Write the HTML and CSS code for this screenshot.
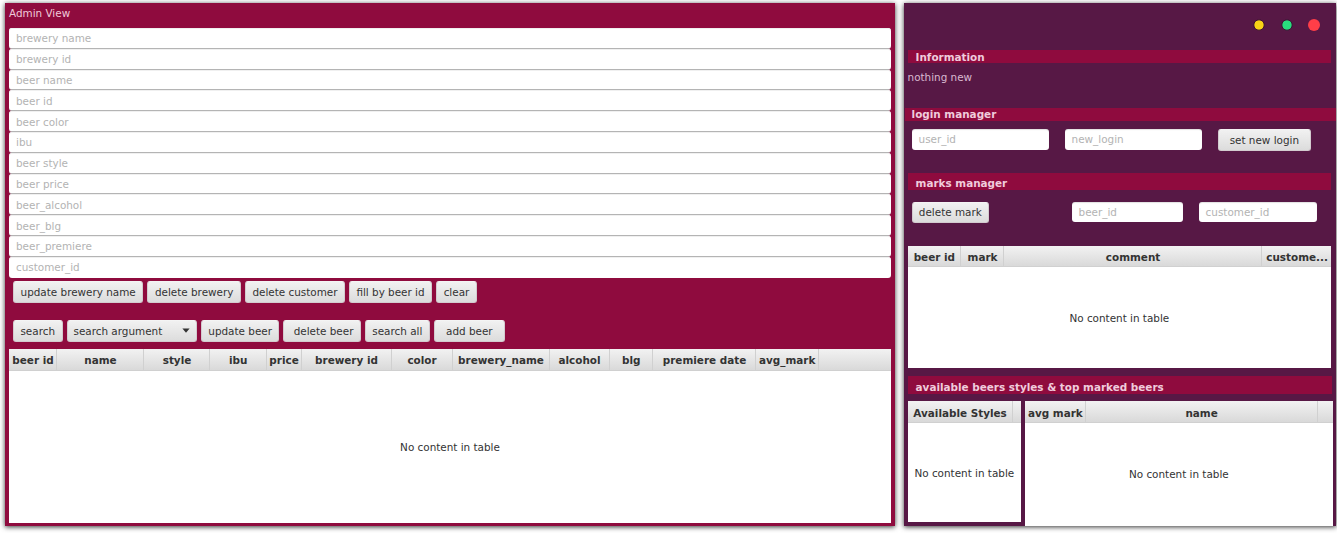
FILE: index.html
```
<!DOCTYPE html>
<html lang="en">
<head>
<meta charset="utf-8">
<title>Admin View</title>
<link rel="stylesheet" href="styles.css">
</head>
<body>
<main class="desktop">
  <section class="window admin">
    <h1 class="title">Admin View</h1>
    <div class="form">
      <div class="field">brewery name</div>
      <div class="field">brewery id</div>
      <div class="field">beer name</div>
      <div class="field">beer id</div>
      <div class="field">beer color</div>
      <div class="field">ibu</div>
      <div class="field">beer style</div>
      <div class="field">beer price</div>
      <div class="field">beer_alcohol</div>
      <div class="field">beer_blg</div>
      <div class="field">beer_premiere</div>
      <div class="field">customer_id</div>
    </div>
    <div class="toolbar toolbar-top">
      <button class="btn w-update-brewery">update brewery name</button>
      <button class="btn w-delete-brewery">delete brewery</button>
      <button class="btn w-delete-customer">delete customer</button>
      <button class="btn w-fill">fill by beer id</button>
      <button class="btn w-clear">clear</button>
    </div>
    <div class="toolbar">
      <button class="btn w-search">search</button>
      <button class="btn combo">search argument<svg class="arrow" viewBox="0 0 8 5"><path d="M0.4 0.4h7.2L4 4.7z"/></svg></button>
      <button class="btn w-update-beer">update beer</button>
      <button class="btn w-delete-beer">delete beer</button>
      <button class="btn w-search-all">search all</button>
      <button class="btn w-add">add beer</button>
    </div>
    <div class="table beers">
      <div class="head">
        <span>beer id</span><span>name</span><span>style</span><span>ibu</span><span>price</span><span>brewery id</span><span>color</span><span>brewery_name</span><span>alcohol</span><span>blg</span><span>premiere date</span><span>avg_mark</span><span></span>
      </div>
      <div class="empty">No content in table</div>
    </div>
  </section>

  <section class="window manager">
    <div class="controls">
      <svg class="dot" viewBox="0 0 14 14"><circle cx="7" cy="7" r="5.2" fill="#f9d216" stroke="#3b1033" stroke-width="1"/></svg>
      <svg class="dot" viewBox="0 0 14 14"><circle cx="7" cy="7" r="5.2" fill="#29dd7d" stroke="#3b1033" stroke-width="1"/></svg>
      <svg class="dot" viewBox="0 0 14 14"><circle cx="7" cy="7" r="6" fill="#ff3e48"/></svg>
    </div>
    <h2 class="bar bar-info">Information</h2>
    <p class="message">nothing new</p>
    <h2 class="bar bar-login">login manager</h2>
    <div class="row login-row">
      <div class="field">user_id</div>
      <div class="field">new_login</div>
      <button class="btn">set new login</button>
    </div>
    <h2 class="bar bar-marks">marks manager</h2>
    <div class="row marks-row">
      <button class="btn">delete mark</button>
      <div class="field beer-field">beer_id</div>
      <div class="field customer-field">customer_id</div>
    </div>
    <div class="table marks">
      <div class="head"><span>beer id</span><span>mark</span><span>comment</span><span>custome...</span></div>
      <div class="empty">No content in table</div>
    </div>
    <h2 class="bar bar-styles">available beers styles &amp; top marked beers</h2>
    <div class="bottom">
      <div class="table styles">
        <div class="head"><span>Available Styles</span><span></span></div>
        <div class="empty">No content in table</div>
      </div>
      <div class="table top">
        <div class="head"><span>avg mark</span><span>name</span><span></span></div>
        <div class="empty">No content in table</div>
      </div>
    </div>
  </section>
</main>
</body>
</html>
```
FILE: styles.css
```
* { box-sizing: border-box; }
body {
  margin: 0;
  background: #fff;
  font: 10.42px/14px "DejaVu Sans", sans-serif;
  color: #333;
  overflow: hidden;
}
h1, h2, p { margin: 0; font-size: inherit; }
.desktop {
  display: flex;
  gap: 8.2px;
  width: 1337px;
  height: 533px;
  padding: 3px 0 0 5px;
}
.window {
  height: 522.5px;
  display: flex;
  flex-direction: column;
  flex: none;
  box-shadow: 0 1px 5px rgba(0, 0, 0, .8);
}
.admin { width: 890.4px; padding: 0 4.4px 3px 4px; background: #8f0b3e; }
.manager { width: 432px; padding: 0 4px; background: #571845; }
.title { height: 25px; padding-top: 3px; font-weight: normal; color: #efc9d9; }
.form { display: grid; grid-template-rows: repeat(12, 20.8px); }
.field {
  display: flex;
  align-items: center;
  padding: 0 7px;
  background: #fff;
  border-radius: 3px;
  box-shadow: inset 0 1px 1px rgba(0, 0, 0, .12);
  color: #b3b3b3;
}
.form .field { padding-top: 1px; border-bottom: 1px solid #b4b4b4; box-shadow: inset 0 1px 0 #f0f0f0; }
.form .field:last-child { border-bottom: 0; padding-top: 0; }
.btn {
  height: 21.5px;
  padding: 0;
  border: 1px solid #d3cbcf;
  border-top-color: #f4f4f4;
  border-radius: 3px;
  background: linear-gradient(#f1f1f1, #dcdcdc);
  font: inherit;
  color: #333;
  white-space: nowrap;
}
.toolbar { display: flex; gap: 4px; padding: 0 4px; margin-bottom: 7.5px; }
.toolbar-top { margin: 3.6px 0 17.4px; }
.w-update-brewery { width: 130.3px; }
.w-delete-brewery { width: 93.7px; }
.w-delete-customer { width: 100px; }
.w-fill { width: 83px; }
.w-clear { width: 41px; }
.w-search { width: 49.5px; }
.combo { width: 130.5px; display: flex; align-items: center; justify-content: space-between; padding: 0 6px; }
.arrow { width: 8px; height: 5px; fill: #333; }
.w-update-beer { width: 78.3px; }
.w-delete-beer { width: 77.5px; padding-left: 3px; }
.w-search-all { width: 65px; }
.w-add { width: 71px; }
.table { display: flex; flex-direction: column; background: #fff; }
.head {
  display: grid;
  height: 21.5px;
  flex: none;
  background: linear-gradient(#f2f2f2, #d9d9d9);
  border-bottom: 1px solid #d0d0d0;
  font-weight: bold;
}
.head span {
  display: flex;
  align-items: center;
  justify-content: center;
  padding: 2px 0 0 1px;
  border-right: 1px solid #d0d0d0;
  white-space: nowrap;
  overflow: hidden;
}
.head span:last-child { border-right: 0; }
.empty { flex: 1; display: flex; align-items: center; justify-content: center; }
.beers { flex: 1; }
.beers .head { grid-template-columns: 48px 87px 66px 56.5px 35px 90px 61px 97px 60px 43.5px 103px 62.5px 1fr; }
.controls { display: flex; justify-content: flex-end; gap: 13.3px; height: 47px; padding: 14.5px 10.7px 0 0; }
.dot { width: 14px; height: 14px; }
.bar { display: flex; align-items: center; flex: none; padding: 0 8px; background: #8f0b3e; color: #f0ccdc; font-weight: bold; }
.bar-info { height: 13px; margin-right: .5px; }
.message { height: 45px; padding-top: 7px; color: #d9b9d0; }
.bar-login { height: 12.5px; margin: 0 -4px 0 -3px; padding: 0 7px; }
.row { display: flex; flex: none; }
.login-row { gap: 16px; padding: 8.5px 4px 0; height: 52px; }
.login-row .field { width: 137px; height: 20.7px; }
.login-row .btn { width: 93.5px; }
.bar-marks { height: 17px; padding-top: 3px; margin-right: .5px; }
.marks-row { padding: 12px 4px 0; height: 56px; }
.marks-row .btn { width: 77.5px; }
.marks-row .field { height: 20.7px; padding-top: 1px; }
.beer-field { width: 111px; margin-left: 82.5px; }
.customer-field { width: 118.5px; margin-left: 16px; }
.marks { height: 122.5px; margin-right: .5px; flex: none; }
.marks .head { grid-template-columns: 53.5px 43px 258px 1fr; }
.bar-styles { height: 17.5px; margin-top: 8px; padding-top: 5px; }
.bottom { display: flex; gap: 4px; margin: 7.5px -1px 0 0; flex: 1; align-items: stretch; }
.bottom .head span { padding-top: 3px; }
.styles { width: 113.5px; margin-bottom: 3.5px; }
.styles .empty { padding-top: 1px; }
.styles .head { grid-template-columns: 105px 1fr; }
.top { flex: 1; }
.top .head { grid-template-columns: 60.5px 232px 1fr; }
```
